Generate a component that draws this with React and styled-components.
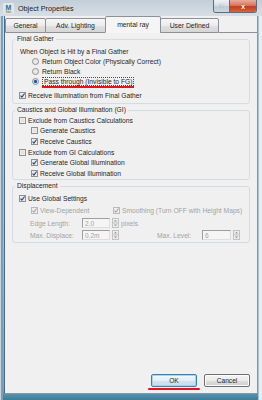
import styled, { createGlobalStyle } from "styled-components";

const GlobalStyle = createGlobalStyle`
  html, body { margin: 0; padding: 0; }
  body {
    width: 262px;
    height: 400px;
    overflow: hidden;
    background: #3e7e9b;
    font-family: "Liberation Sans", Arial, sans-serif;
    color: #1f1f1f;
  }
  * { box-sizing: border-box; }
`;

const Window = styled.div`
  width: 262px;
  height: 400px;
  display: flex;
  flex-direction: column;
  background: linear-gradient(180deg, #c3ced9 0px, #d7dee5 16px, #b9cad8 30%, #98b5ca 70%, #7aa4be 97%, #3b7d99 100%);
`;

const TitleBar = styled.div`
  height: 16px;
  flex-shrink: 0;
  display: flex;
  align-items: flex-start;
`;

const AppIcon = styled.svg`
  margin: 3px 0 0 3px;
  flex-shrink: 0;
`;

const Title = styled.span`
  flex: 1;
  margin: 4px 0 0 4px;
  font-size: 7.2px;
  line-height: 9px;
  color: #1b1b1b;
`;

const CaptionGroup = styled.div`
  display: flex;
  height: 13px;
  margin-right: 5px;
  border: 1px solid #5d6c7c;
  border-top: none;
  border-radius: 0 0 3px 3px;
  overflow: hidden;
`;

const CaptionButton = styled.div`
  width: ${p => p.$w}px;
  display: flex;
  align-items: center;
  justify-content: center;
  font-size: 7.5px;
  font-weight: bold;
  color: #fff;
  text-shadow: 0 0 1px ${p => (p.$close ? "#5a1a0c" : "#3a4a5a")};
  background: ${p =>
    p.$close
      ? "linear-gradient(#e9ad9c, #d9765f 45%, #c53b1e 55%, #d8653f)"
      : "linear-gradient(#eef2f6, #d6dee6 45%, #bfcad6 55%, #ccd7e1)"};
  & + & { border-left: 1px solid #5d6c7c; }
`;

const Frame = styled.div`
  flex: 1;
  display: flex;
  padding: 0 4px 6px 4px;
  box-shadow: inset 1px 0 #c9d5df, inset 3px 0 #7d9db7, inset -3px 0 #e2edf4, inset -4px 0 #aac0d0;
`;

const Client = styled.div`
  flex: 1;
  display: flex;
  flex-direction: column;
  background: #f0f0f0;
  border: 1px solid #8896a4;
  border-top: none;
  border-left-color: #46698a;
`;

const TabStrip = styled.div`
  height: 17px;
  flex-shrink: 0;
  display: flex;
  align-items: flex-end;
`;

const Tab = styled.div`
  width: ${p => p.$w}px;
  height: ${p => (p.$active ? 17 : 15)}px;
  margin-right: -1px;
  display: flex;
  align-items: center;
  justify-content: center;
  font-size: 6.8px;
  color: #1f1f1f;
  border: 1px solid #8c9099;
  border-bottom-color: ${p => (p.$active ? "transparent" : "#8c9099")};
  border-radius: 2px 2px 0 0;
  background: ${p =>
    p.$active ? "#f5f5f5" : "linear-gradient(#f6f6f6, #ececec 50%, #e0e0e0 51%, #d6d6d6)"};
`;

const TabFiller = styled.div`
  flex: 1;
  margin-left: 1px;
  border-bottom: 1px solid #8c9099;
`;

const TabPage = styled.div`
  flex: 1;
  display: flex;
  flex-direction: column;
  gap: 2px;
  padding: 2px 0 0 7px;
`;

const Group = styled.fieldset`
  width: 238px;
  margin: 0;
  padding: 0;
  border: 1px solid #d3dce2;
  border-radius: 3px;
`;

const Legend = styled.legend`
  margin-left: 2px;
  padding: 0 2px;
  font-size: 6.7px;
  line-height: 8px;
  color: #1f1f1f;
`;

const GroupBody = styled.div`
  padding: ${p => p.$pt}px 0 ${p => p.$pb}px 6px;
`;

const Row = styled.div`
  height: ${p => p.$h || 10}px;
  margin-top: ${p => p.$mt || 0}px;
  padding-left: ${p => p.$indent || 0}px;
  display: flex;
  align-items: center;
  font-size: 6.7px;
  white-space: nowrap;
  color: ${p => (p.$disabled ? "#a3a3a3" : "#1f1f1f")};
`;

const Cell = styled.div`
  width: ${p => p.$w}px;
  margin-left: ${p => p.$ml || 0}px;
  display: flex;
  align-items: center;
  flex-shrink: 0;
`;

const Mark = styled.svg`
  flex-shrink: 0;
  margin-right: ${p => p.$gap}px;
`;

const FocusLabel = styled.span`
  padding: 0 1px;
  line-height: 7px;
  border: 1px dotted #4a4a4a;
  box-shadow: 0 2px 0 #e3141c;
`;

const Field = styled.div`
  width: ${p => p.$w}px;
  height: 10px;
  padding-left: 2px;
  display: flex;
  align-items: center;
  font-size: 6.5px;
  color: #a3a3a3;
  background: #f5f5f5;
  border: 1px solid;
  border-color: #9e9e9e #dedede #dedede #9e9e9e;
`;

const Spin = styled.svg`
  margin-left: 2px;
  flex-shrink: 0;
`;

const Unit = styled.span`
  margin-left: 2px;
`;

const ButtonRow = styled.div`
  flex-shrink: 0;
  display: flex;
  justify-content: flex-end;
  gap: 7px;
  padding: 0 7px 6px 0;
`;

const Button = styled.div`
  position: relative;
  width: 46px;
  height: 13px;
  display: flex;
  align-items: center;
  justify-content: center;
  font-size: 6.6px;
  color: #1f1f1f;
  border-radius: 2px;
  border: 1px solid ${p => (p.$default ? "#3c7fb1" : "#707070")};
  background: ${p =>
    p.$default
      ? "linear-gradient(#f4f9fc, #e3eef5 50%, #d2e3ee 51%, #c9dce9)"
      : "linear-gradient(#f4f4f4, #ebebeb 50%, #dddddd 51%, #d0d0d0)"};
  box-shadow: ${p => (p.$default ? "0 0 0 1px #a9d3ef inset" : "0 0 0 1px #fbfbfb inset")};

  ${p =>
    p.$marked &&
    `&::after {
      content: "";
      position: absolute;
      left: -4px;
      right: -4px;
      bottom: -4px;
      height: 2px;
      border-radius: 1px;
      background: #e3141c;
    }`}
`;

const Check = ({ checked, disabled }) => {
  const line = disabled ? "#b9b9b9" : "#8e8f8f";
  const tick = disabled ? "#a8a8a8" : "#2b4a80";
  return (
    <Mark width="7" height="7" viewBox="0 0 7 7" $gap={2}>
      <rect x="0.5" y="0.5" width="6" height="6" fill={disabled ? "#f2f2f2" : "#f6f6f6"} stroke={line} />
      <rect x="1.5" y="1.5" width="4" height="4" fill={disabled ? "#ececec" : "#e2e2e2"} />
      {checked && (
        <path d="M1.5 3.6 L2.9 5.1 L5.6 1.5" fill="none" stroke={tick} strokeWidth="1.1" />
      )}
    </Mark>
  );
};

const Radio = ({ checked }) => (
  <Mark width="7" height="7" viewBox="0 0 7 7" $gap={3}>
    <circle cx="3.5" cy="3.5" r="3" fill="#e9e9e9" stroke="#8e8f8f" />
    {checked && <circle cx="3.5" cy="3.5" r="1.7" fill="#1d5aa6" />}
  </Mark>
);

const Spinner = () => (
  <Spin width="7" height="10" viewBox="0 0 7 10">
    <rect x="0.5" y="0.5" width="6" height="9" fill="#eeeeee" stroke="#c2c2c2" />
    <line x1="0.5" y1="5" x2="6.5" y2="5" stroke="#c2c2c2" />
    <path d="M1.8 3.6 L3.5 1.8 L5.2 3.6 Z" fill="#9a9a9a" />
    <path d="M1.8 6.4 L3.5 8.2 L5.2 6.4 Z" fill="#9a9a9a" />
  </Spin>
);

const tabs = [
  { label: "General", w: 41 },
  { label: "Adv. Lighting", w: 61 },
  { label: "mental ray", w: 56, active: true },
  { label: "User Defined", w: 59 },
];

export default function App() {
  return (
    <>
      <GlobalStyle />
      <Window>
        <TitleBar>
          <AppIcon width="11" height="11" viewBox="0 0 11 11">
            <rect x="0" y="0" width="11" height="11" rx="1" fill="#dfe7ee" />
            <text x="5.5" y="6.6" fontSize="7" fontWeight="bold" fill="#2d6d8c" textAnchor="middle" fontFamily="Liberation Sans">M</text>
            <text x="5.5" y="10.4" fontSize="3.6" fill="#7a5a22" textAnchor="middle" fontFamily="Liberation Sans">3ds</text>
          </AppIcon>
          <Title>Object Properties</Title>
          <CaptionGroup>
            <CaptionButton $w={15}>?</CaptionButton>
            <CaptionButton $w={27} $close>x</CaptionButton>
          </CaptionGroup>
        </TitleBar>

        <Frame>
          <Client>
            <TabStrip>
              {tabs.map(t => (
                <Tab key={t.label} $w={t.w} $active={t.active}>{t.label}</Tab>
              ))}
              <TabFiller />
            </TabStrip>

            <TabPage>
              <Group>
                <Legend>Final Gather</Legend>
                <GroupBody $pt={3} $pb={3}>
                  <Row $indent={1}>When Object is Hit by a Final Gather</Row>
                  <Row $indent={13}><Radio />Return Object Color (Physically Correct)</Row>
                  <Row $indent={13}><Radio />Return Black</Row>
                  <Row $indent={13}><Radio checked /><FocusLabel>Pass through (Invisible to FG)</FocusLabel></Row>
                  <Row $mt={4}><Check checked />Receive Illumination from Final Gather</Row>
                </GroupBody>
              </Group>

              <Group>
                <Legend>Caustics and Global Illumination (GI)</Legend>
                <GroupBody $pt={1} $pb={1}>
                  <Row $h={10}><Check />Exclude from Caustics Calculations</Row>
                  <Row $h={11} $indent={12}><Check />Generate Caustics</Row>
                  <Row $h={11} $indent={12}><Check checked />Receive Caustics</Row>
                  <Row $h={10}><Check />Exclude from GI Calculations</Row>
                  <Row $h={11} $indent={12}><Check checked />Generate Global Illumination</Row>
                  <Row $h={10} $indent={12}><Check checked />Receive Global Illumination</Row>
                </GroupBody>
              </Group>

              <Group>
                <Legend>Displacement</Legend>
                <GroupBody $pt={2} $pb={1}>
                  <Row $h={12}><Check checked />Use Global Settings</Row>
                  <Row $h={13} $indent={12} $disabled>
                    <Cell $w={82}><Check checked disabled />View-Dependent</Cell>
                    <Check checked disabled />Smoothing (Turn OFF with Height Maps)
                  </Row>
                  <Row $h={12} $indent={11} $disabled>
                    <Cell $w={52}>Edge Length:</Cell>
                    <Field $w={28}>2.0</Field>
                    <Spinner />
                    <Unit>pixels</Unit>
                  </Row>
                  <Row $h={12} $indent={11} $disabled>
                    <Cell $w={52}>Max. Displace:</Cell>
                    <Field $w={28}>0.2m</Field>
                    <Spinner />
                    <Cell $w={45} $ml={38}>Max. Level:</Cell>
                    <Field $w={29}>6</Field>
                    <Spinner />
                  </Row>
                </GroupBody>
              </Group>
            </TabPage>

            <ButtonRow>
              <Button $default $marked>OK</Button>
              <Button>Cancel</Button>
            </ButtonRow>
          </Client>
        </Frame>
      </Window>
    </>
  );
}
